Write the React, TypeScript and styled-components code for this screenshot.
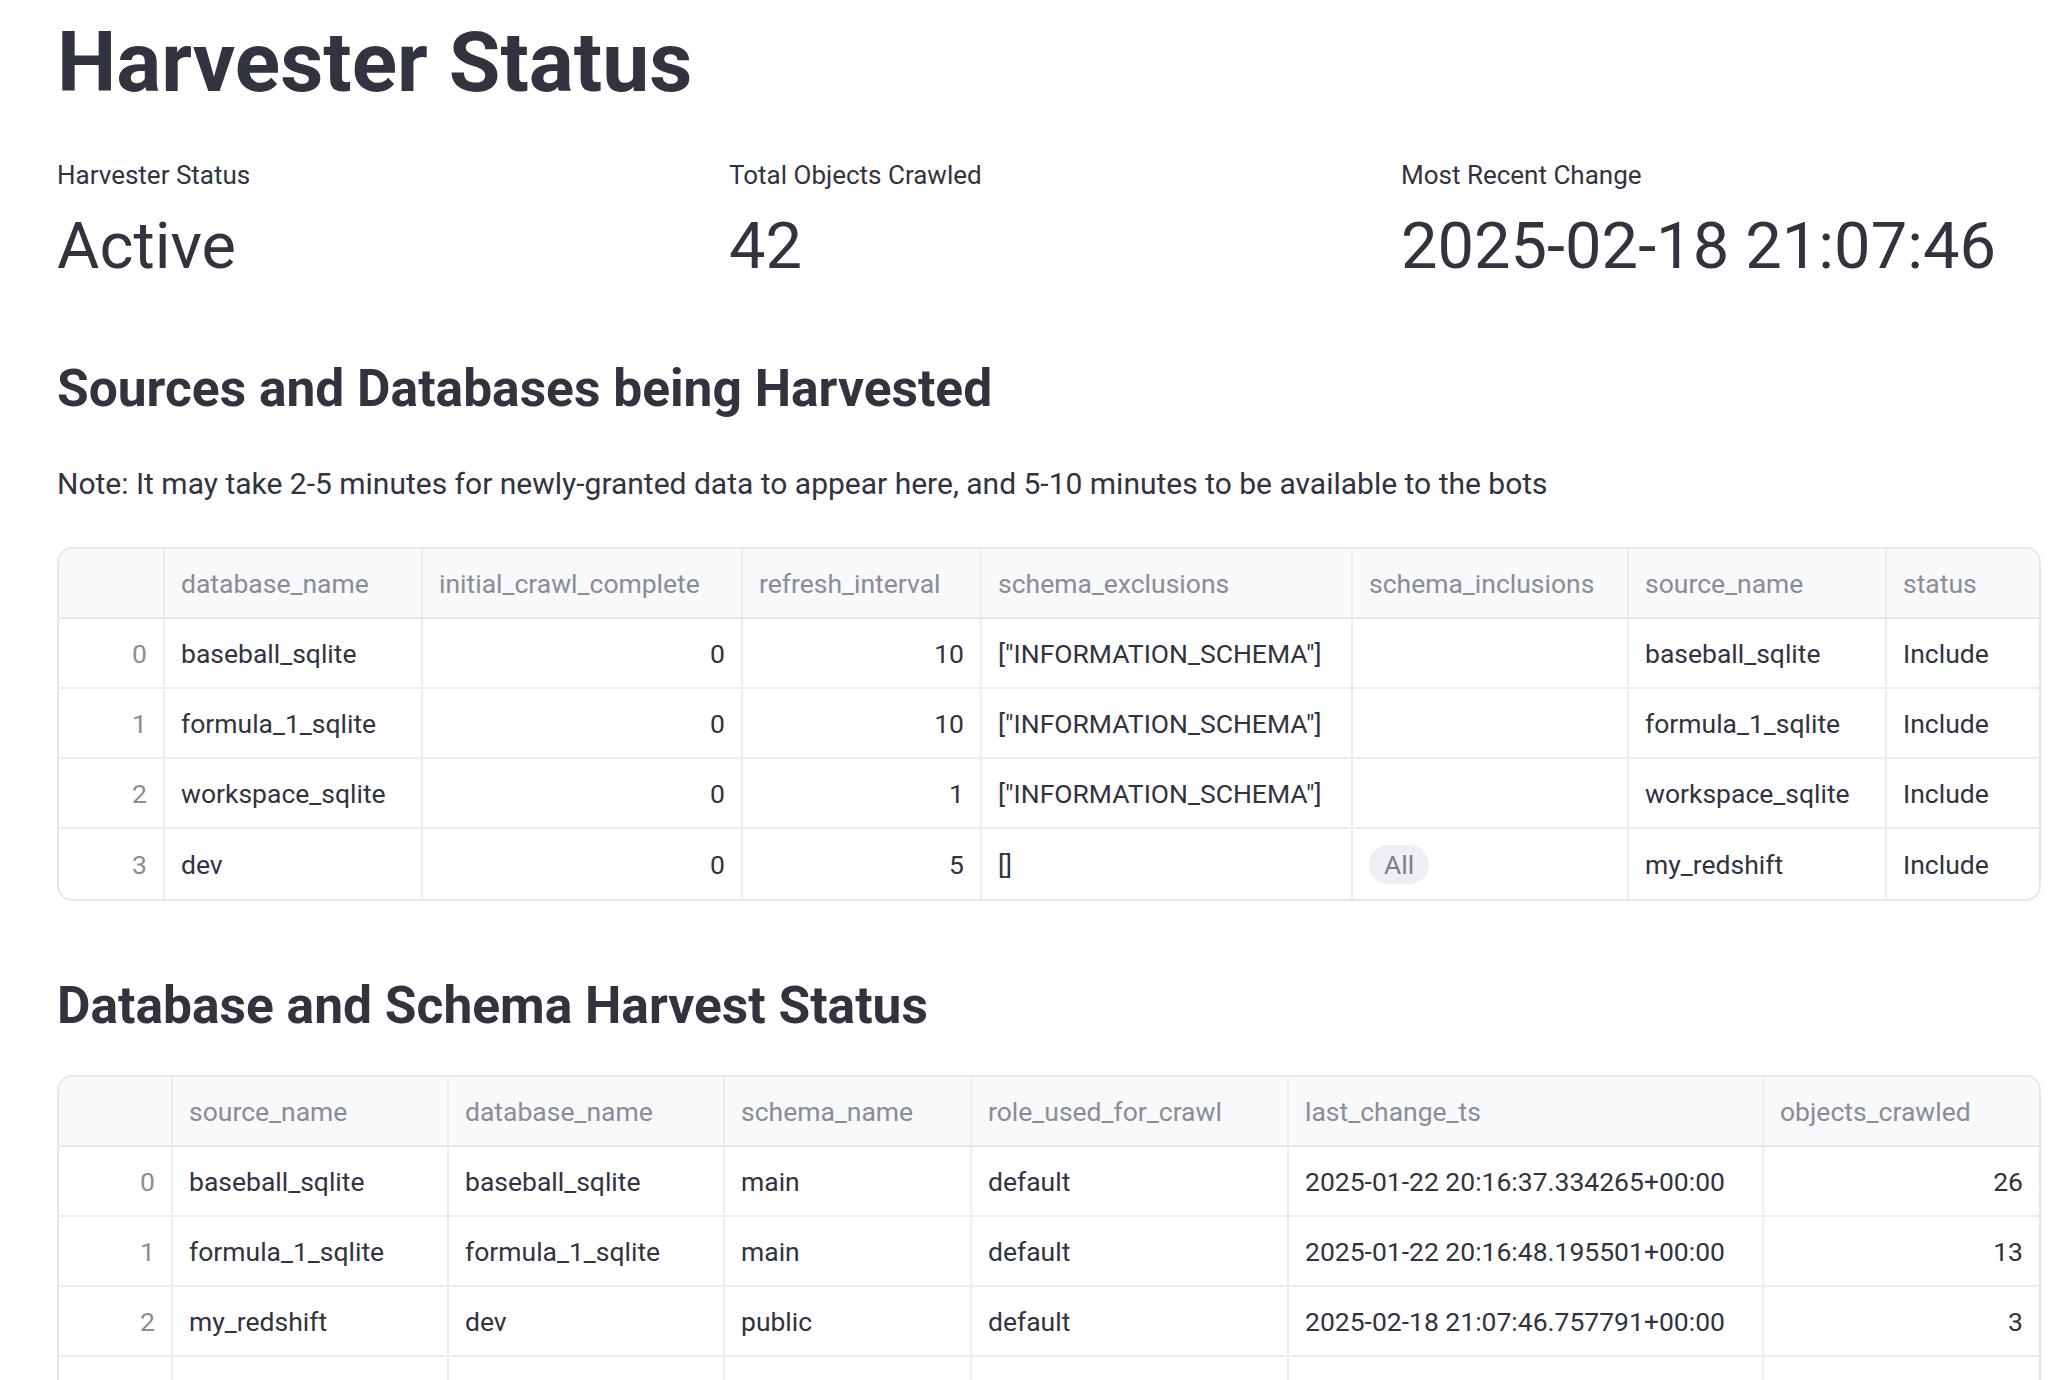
import React from 'react'
import styled, { createGlobalStyle } from 'styled-components'

const GlobalStyle = createGlobalStyle`
  html, body {
    margin: 0;
    padding: 0;
    background: #FFFFFF;
  }
  body {
    font-family: Roboto, "Noto Sans", "Liberation Sans", sans-serif;
    color: #31333F;
  }
`

type Align = 'left' | 'right'

interface Column {
  key: string
  label: string
  width: number
  align?: Align
}

type Row = Record<string, string | number | null>

const sourceColumns: Column[] = [
  { key: 'database_name', label: 'database_name', width: 258 },
  { key: 'initial_crawl_complete', label: 'initial_crawl_complete', width: 320, align: 'right' },
  { key: 'refresh_interval', label: 'refresh_interval', width: 239, align: 'right' },
  { key: 'schema_exclusions', label: 'schema_exclusions', width: 371 },
  { key: 'schema_inclusions', label: 'schema_inclusions', width: 276 },
  { key: 'source_name', label: 'source_name', width: 258 },
  { key: 'status', label: 'status', width: 152 },
]

const sourceRows: Row[] = [
  { database_name: 'baseball_sqlite', initial_crawl_complete: 0, refresh_interval: 10, schema_exclusions: '["INFORMATION_SCHEMA"]', schema_inclusions: null, source_name: 'baseball_sqlite', status: 'Include' },
  { database_name: 'formula_1_sqlite', initial_crawl_complete: 0, refresh_interval: 10, schema_exclusions: '["INFORMATION_SCHEMA"]', schema_inclusions: null, source_name: 'formula_1_sqlite', status: 'Include' },
  { database_name: 'workspace_sqlite', initial_crawl_complete: 0, refresh_interval: 1, schema_exclusions: '["INFORMATION_SCHEMA"]', schema_inclusions: null, source_name: 'workspace_sqlite', status: 'Include' },
  { database_name: 'dev', initial_crawl_complete: 0, refresh_interval: 5, schema_exclusions: '[]', schema_inclusions: 'All', source_name: 'my_redshift', status: 'Include' },
]

const harvestColumns: Column[] = [
  { key: 'source_name', label: 'source_name', width: 276 },
  { key: 'database_name', label: 'database_name', width: 276 },
  { key: 'schema_name', label: 'schema_name', width: 247 },
  { key: 'role_used_for_crawl', label: 'role_used_for_crawl', width: 317 },
  { key: 'last_change_ts', label: 'last_change_ts', width: 475 },
  { key: 'objects_crawled', label: 'objects_crawled', width: 275, align: 'right' },
]

const harvestRows: Row[] = [
  { source_name: 'baseball_sqlite', database_name: 'baseball_sqlite', schema_name: 'main', role_used_for_crawl: 'default', last_change_ts: '2025-01-22 20:16:37.334265+00:00', objects_crawled: 26 },
  { source_name: 'formula_1_sqlite', database_name: 'formula_1_sqlite', schema_name: 'main', role_used_for_crawl: 'default', last_change_ts: '2025-01-22 20:16:48.195501+00:00', objects_crawled: 13 },
  { source_name: 'my_redshift', database_name: 'dev', schema_name: 'public', role_used_for_crawl: 'default', last_change_ts: '2025-02-18 21:07:46.757791+00:00', objects_crawled: 3 },
  { source_name: 'workspace_sqlite', database_name: 'workspace_sqlite', schema_name: 'main', role_used_for_crawl: 'default', last_change_ts: '2025-01-22 20:16:52.104318+00:00', objects_crawled: 0 },
]

const metrics = [
  { label: 'Harvester Status', value: 'Active' },
  { label: 'Total Objects Crawled', value: '42' },
  { label: 'Most Recent Change', value: '2025-02-18 21:07:46' },
]

const DataTable: React.FC<{ columns: Column[]; rows: Row[]; indexWidth: number }> = ({ columns, rows, indexWidth }) => (
  <TableFrame>
    <Table>
      <colgroup>
        <col style={{ width: indexWidth }} />
        {columns.map((c) => (
          <col key={c.key} style={{ width: c.width }} />
        ))}
      </colgroup>
      <thead>
        <tr>
          <HeaderCell />
          {columns.map((c) => (
            <HeaderCell key={c.key}>{c.label}</HeaderCell>
          ))}
        </tr>
      </thead>
      <tbody>
        {rows.map((row, i) => (
          <BodyRow key={i}>
            <Cell $align="right" $muted>{i}</Cell>
            {columns.map((c) => {
              const v = row[c.key]
              return (
                <Cell key={c.key} $align={c.align || 'left'}>
                  {c.key === 'schema_inclusions' && v ? <Pill>{v}</Pill> : v}
                </Cell>
              )
            })}
          </BodyRow>
        ))}
      </tbody>
    </Table>
  </TableFrame>
)

const App: React.FC = () => {
  return (
    <Page>
      <GlobalStyle />
      <Title>Harvester Status</Title>
      <MetricRow>
        {metrics.map((m) => (
          <Metric key={m.label}>
            <MetricLabel>{m.label}</MetricLabel>
            <MetricValue>{m.value}</MetricValue>
          </Metric>
        ))}
      </MetricRow>

      <SectionTitle>Sources and Databases being Harvested</SectionTitle>
      <Note>
        Note: It may take 2-5 minutes for newly-granted data to appear here, and 5-10 minutes to be available to the bots
      </Note>
      <DataTable columns={sourceColumns} rows={sourceRows} indexWidth={106} />

      <SectionTitle $spaced>Database and Schema Harvest Status</SectionTitle>
      <DataTable columns={harvestColumns} rows={harvestRows} indexWidth={114} />
    </Page>
  )
}

const Page = styled.div`
  padding: 15px 25px 40px 57px;
  display: flex;
  flex-direction: column;
`

const Title = styled.h1`
  margin: 0;
  font-size: 84px;
  line-height: 96px;
  font-weight: 700;
  color: #31333F;
`

const MetricRow = styled.div`
  display: grid;
  grid-template-columns: repeat(3, 1fr);
  gap: 32px;
  margin-top: 46px;
`

const Metric = styled.div`
  display: flex;
  flex-direction: column;
  gap: 13px;
`

const MetricLabel = styled.div`
  font-size: 26px;
  line-height: 36px;
  color: #31333F;
`

const MetricValue = styled.div`
  font-size: 65px;
  line-height: 80px;
  color: #31333F;
`

const SectionTitle = styled.h3<{ $spaced?: boolean }>`
  margin: ${(p) => (p.$spaced ? '73px 0 37px' : '71px 0 0')};
  font-size: 51.5px;
  line-height: 64px;
  font-weight: 700;
  color: #31333F;
`

const Note = styled.p`
  margin: 41px 0 41px;
  font-size: 30px;
  line-height: 44px;
  color: #31333F;
`

const TableFrame = styled.div`
  border: 2px solid #E6E7EA;
  border-radius: 15px;
  overflow: hidden;
`

const Table = styled.table`
  width: 100%;
  table-layout: fixed;
  border-collapse: separate;
  border-spacing: 0;
`

const HeaderCell = styled.th`
  box-sizing: border-box;
  height: 70px;
  padding: 0 16px;
  background: #F8F9FB;
  border-bottom: 2px solid #E6E7EA;
  border-right: 2px solid #ECEDF0;
  text-align: left;
  font-size: 26.5px;
  font-weight: 400;
  color: #8A8C96;
  white-space: nowrap;
  overflow: hidden;

  &:last-child {
    border-right: none;
  }
`

const BodyRow = styled.tr`
  &:last-child td {
    border-bottom: none;
  }
`

const Cell = styled.td<{ $align: Align; $muted?: boolean }>`
  box-sizing: border-box;
  height: 70px;
  padding: 0 16px;
  border-bottom: 2px solid #ECEDF0;
  border-right: 2px solid #ECEDF0;
  text-align: ${(p) => p.$align};
  font-size: 26.5px;
  color: ${(p) => (p.$muted ? '#8A8C96' : '#31333F')};
  white-space: nowrap;
  overflow: hidden;

  &:last-child {
    border-right: none;
  }
`

const Pill = styled.span`
  display: inline-flex;
  align-items: center;
  height: 39px;
  padding: 0 15px;
  border-radius: 20px;
  background: #EEEFF3;
  color: #7C7E88;
`

export default App
